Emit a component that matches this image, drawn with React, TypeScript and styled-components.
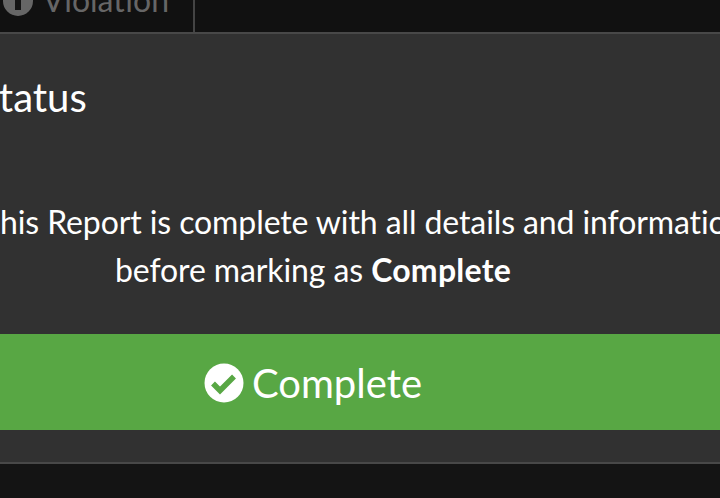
import React from "react";
import styled, { createGlobalStyle } from "styled-components";

const GlobalStyle = createGlobalStyle`
  html, body {
    margin: 0;
    padding: 0;
    background: #141414;
  }
`;

const App = () => {
  return (
    <Page>
      <GlobalStyle />
      <TopBar>
        <Tab>
          <InfoIcon viewBox="0 0 30 30">
            <circle cx="15" cy="15" r="15" fill="#666" />
            <rect x="12" y="13" width="6" height="11" fill="#141414" />
            <circle cx="15" cy="8" r="3" fill="#141414" />
          </InfoIcon>
          <TabLabel>Violation</TabLabel>
        </Tab>
      </TopBar>
      <Modal>
        <Header>Status</Header>
        <Message>
          <MessageLine $shift={4}>Ensure this Report is complete with all details and information</MessageLine>
          <MessageLine>
            before marking as <strong>Complete</strong>
          </MessageLine>
        </Message>
        <CompleteButton>
          <CheckIcon viewBox="0 0 40 40">
            <circle cx="20" cy="20" r="19.5" fill="#fff" />
            <path d="M9 20.5 L16 27.5 L30 13.5" fill="none" stroke="#58a744" strokeWidth="5.5" />
          </CheckIcon>
          Complete
        </CompleteButton>
      </Modal>
    </Page>
  );
};

export default App;

const Page = styled.div`
  width: 720px;
  height: 498px;
  overflow: hidden;
  background: #141414;
  font-family: Lato, sans-serif;
  color: #fff;
`;

const TopBar = styled.div`
  height: 32px;
  display: flex;
  background: #111;
`;

const Tab = styled.div`
  width: 195px;
  height: 32px;
  box-sizing: border-box;
  border-right: 2px solid #444;
  display: flex;
  justify-content: flex-end;
  align-items: flex-end;
  padding-right: 24px;
  gap: 10px;
  overflow: hidden;
  & > * { flex-shrink: 0; }
`;

const TabLabel = styled.span`
  font-size: 32px;
  line-height: 40px;
  color: #666;
  margin-bottom: 12px;
`;

const InfoIcon = styled.svg`
  width: 30px;
  height: 30px;
  margin-bottom: 16px;
`;

const Modal = styled.div`
  width: 1000px;
  margin-left: -187px;
  height: 432px;
  box-sizing: border-box;
  background: #313131;
  border-top: 2px solid #484848;
  border-bottom: 2px solid #484848;
`;

const Header = styled.h2`
  margin: 0;
  padding: 39px 0 0 165px;
  font-size: 40px;
  line-height: 48px;
  font-weight: 400;
  height: 122px;
  box-sizing: border-box;
`;

const Message = styled.div`
  height: 178px;
  padding-top: 42px;
  box-sizing: border-box;
  font-size: 32px;
  line-height: 48px;
  letter-spacing: -0.1px;
  text-align: center;
`;

const MessageLine = styled.div<{ $shift?: number }>`
  white-space: nowrap;
  padding-left: ${(p) => p.$shift ?? 0}px;
  strong {
    font-weight: 700;
    letter-spacing: 0.25px;
  }
`;

const CompleteButton = styled.div`
  height: 96px;
  box-sizing: border-box;
  padding-top: 2px;
  background: #58a744;
  display: flex;
  align-items: center;
  justify-content: center;
  gap: 8px;
  font-size: 40px;
`;

const CheckIcon = styled.svg`
  width: 40px;
  height: 40px;
`;
